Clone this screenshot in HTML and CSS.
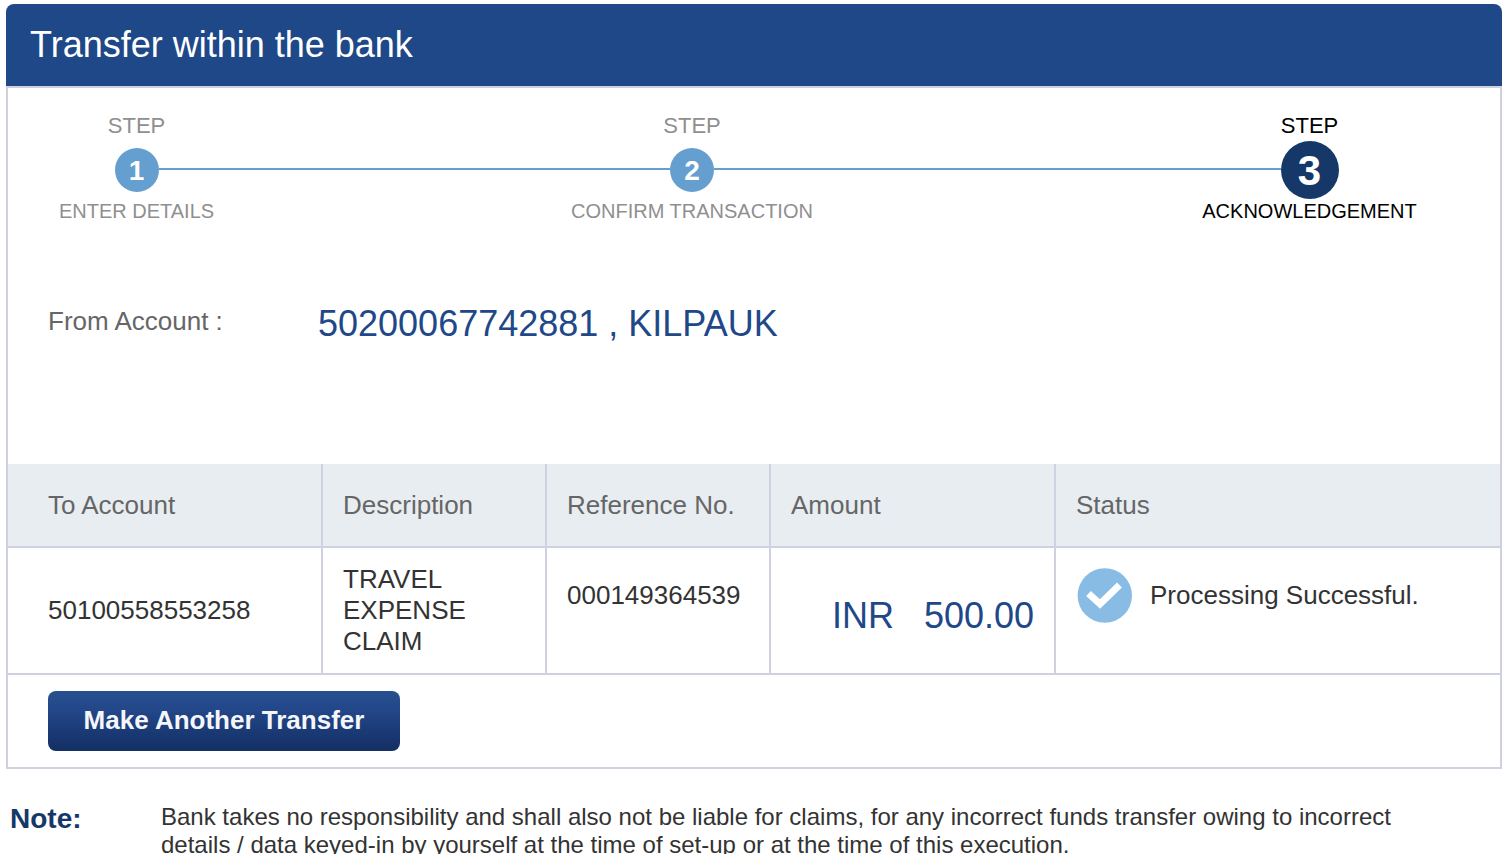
FILE: index.html
```html
<!DOCTYPE html>
<html lang="en">
<head>
<meta charset="UTF-8">
<meta name="viewport" content="width=device-width, initial-scale=1.0">
<title>Transfer within the bank</title>
<link rel="stylesheet" href="styles.css">
</head>
<body>
<div class="panel">
<h1 class="panel-title">Transfer within the bank</h1>
<div class="panel-body">
<div class="steps">
<div class="step first">
<div class="step-word">STEP</div>
<div class="step-rail"><span class="step-number">1</span></div>
<div class="step-label">ENTER DETAILS</div>
</div>
<div class="step">
<div class="step-word">STEP</div>
<div class="step-rail"><span class="step-number">2</span></div>
<div class="step-label">CONFIRM TRANSACTION</div>
</div>
<div class="step last active">
<div class="step-word">STEP</div>
<div class="step-rail"><span class="step-number">3</span></div>
<div class="step-label">ACKNOWLEDGEMENT</div>
</div>
</div>
<div class="from-account">
<span class="from-label">From Account :</span>
<span class="from-value">50200067742881 , KILPAUK</span>
</div>
<table class="transfer-table">
<thead>
<tr>
<th class="col-account">To Account</th>
<th class="col-description">Description</th>
<th class="col-reference">Reference No.</th>
<th class="col-amount">Amount</th>
<th>Status</th>
</tr>
</thead>
<tbody>
<tr>
<td>50100558553258</td>
<td>TRAVEL EXPENSE CLAIM</td>
<td class="cell-top">000149364539</td>
<td class="amount">INR &nbsp; 500.00</td>
<td class="cell-top">
<div class="status">
<svg class="status-icon" viewBox="0 0 56 56" aria-hidden="true">
<circle cx="28.8" cy="27.5" r="27.2" fill="#89bce5"/>
<path d="M12.5 25.5 L24 36 L43.5 17" fill="none" stroke="#fff" stroke-width="7"/>
</svg>
<span>Processing Successful.</span>
</div>
</td>
</tr>
</tbody>
</table>
<div class="actions">
<button type="button" class="button">Make Another Transfer</button>
</div>
</div>
</div>
<div class="note">
<strong class="note-title">Note:</strong>
<p class="note-text">Bank takes no responsibility and shall also not be liable for claims, for any incorrect funds transfer owing to incorrect details / data keyed-in by yourself at the time of set-up or at the time of this execution.</p>
</div>
</body>
</html>
```
FILE: styles.css
```css
body {
font-family: "Liberation Sans", Arial, Helvetica, sans-serif;
font-size: 26px;
line-height: 31px;
color: #333;
background-color: #fff;
margin: 0;
padding: 4px 4px 0 6px;
}
.panel-title {
margin: 0;
padding: 20px 24px;
font-size: 36px;
line-height: 42px;
font-weight: normal;
color: #fff;
background-color: #1e4888;
border-radius: 8px 8px 0 0;
}
.panel-body {
border: 2px solid #cfd0e0;
}
.steps {
display: grid;
grid-template-columns: 257fr 854fr 381fr;
padding-top: 25px;
text-align: center;
color: #8f8f8f;
}
.step-word {
font-size: 22px;
line-height: 26px;
}
.step-label {
font-size: 20px;
line-height: 24px;
}
.step-rail {
display: flex;
align-items: center;
height: 62px;
margin-bottom: -2px;
}
.step-rail::before, .step-rail::after {
content: "";
flex: 1;
height: 2px;
margin-bottom: 2px;
background-color: #659fcf;
}
.first .step-rail::before, .last .step-rail::after {
background-color: transparent;
}
.step-number {
width: 44px;
height: 44px;
border-radius: 50%;
font-size: 28px;
font-weight: bold;
line-height: 46px;
color: #fff;
background-color: #659fcf;
}
.active {
color: #000;
}
.active .step-number {
width: 58px;
height: 58px;
font-size: 42px;
line-height: 60px;
background-color: #163868;
}
.from-account {
display: flex;
align-items: flex-start;
padding: 80px 40px 119px;
}
.from-label {
width: 270px;
line-height: 36px;
color: #666;
}
.from-value {
font-size: 36px;
line-height: 42px;
color: #1e4888;
}
.transfer-table {
width: 100%;
table-layout: fixed;
border-collapse: separate;
border-spacing: 0;
}
.transfer-table th, .transfer-table td {
padding: 16px 20px;
text-align: left;
border-right: 2px solid #cfd0e0;
border-bottom: 2px solid #cfd0e0;
}
.transfer-table th {
height: 50px;
font-weight: normal;
color: #666;
background-color: #e8edf1;
}
.transfer-table th:first-child, .transfer-table td:first-child {
padding-left: 40px;
}
.transfer-table th:last-child, .transfer-table td:last-child {
border-right: none;
}
.col-account {
width: 253px;
}
.col-description, .col-reference {
width: 182px;
}
.col-amount {
width: 243px;
}
.transfer-table .cell-top {
padding-top: 20px;
line-height: 54px;
vertical-align: top;
}
.transfer-table .amount {
padding-top: 26px;
font-size: 36px;
line-height: 42px;
text-align: right;
color: #1e4888;
}
.status {
display: flex;
align-items: flex-start;
gap: 18px;
}
.status-icon {
width: 56px;
height: 56px;
}
.actions {
padding: 16px 40px;
}
.button {
display: block;
min-width: 352px;
padding: 14px 32px 16px;
border: none;
border-radius: 8px;
font: bold 26px/30px "Liberation Sans", Arial, Helvetica, sans-serif;
color: #f4f6fa;
background: linear-gradient(#27508e, #23478a 30%, #132f63);
cursor: pointer;
}
.note {
display: flex;
padding: 34px 40px 0 4px;
}
.note-title {
flex: 0 0 151px;
font-size: 28px;
color: #163868;
}
.note-text {
margin: 0;
font-size: 24px;
line-height: 28px;
}
```
